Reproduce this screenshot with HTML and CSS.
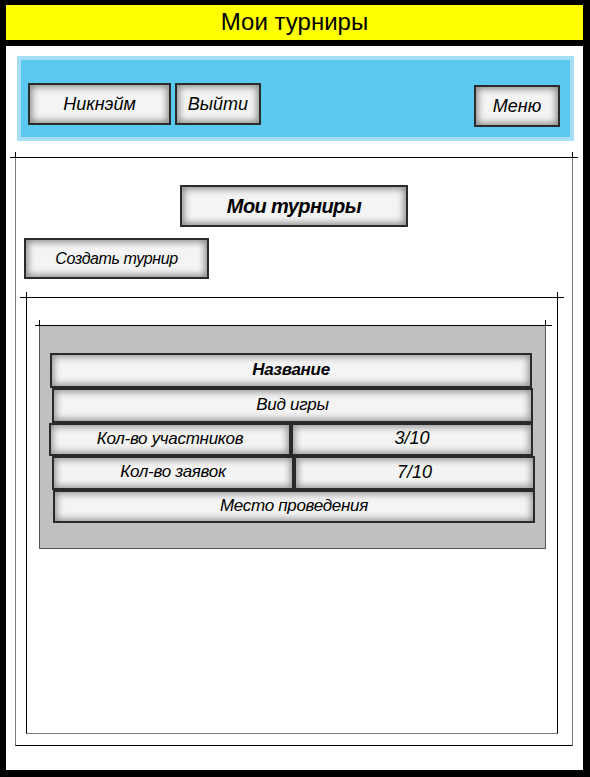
FILE: index.html
```html
<!DOCTYPE html>
<html lang="ru">
<head>
<meta charset="utf-8">
<title>Мои турниры</title>
<link rel="stylesheet" href="styles.css">
</head>
<body>
<div class="frame">
  <header class="topbar">Мои турниры</header>
  <nav class="toolbar">
    <div class="btn btn-nick">Никнэйм</div>
    <div class="btn btn-exit">Выйти</div>
    <div class="btn btn-menu">Меню</div>
  </nav>
  <section class="box outer">
    <div class="btn btn-title">Мои турниры</div>
    <div class="btn btn-create">Создать турнир</div>
    <div class="box inner">
      <div class="panel">
        <div class="row r1"><div class="cell bold">Название</div></div>
        <div class="row r2"><div class="cell">Вид игры</div></div>
        <div class="row r3"><div class="cell half">Кол-во участников</div><div class="cell num">3/10</div></div>
        <div class="row r4"><div class="cell half">Кол-во заявок</div><div class="cell num">7/10</div></div>
        <div class="row r5"><div class="cell">Место проведения</div></div>
      </div>
    </div>
  </section>
</div>
</body>
</html>
```

FILE: styles.css
```css
* { box-sizing: border-box; }
html, body { margin: 0; padding: 0; background: #fff; }
body { font-family: "Liberation Sans", Arial, sans-serif; color: #000; }

.frame {
  width: 590px;
  height: 777px;
  border-style: solid;
  border-color: #000;
  border-width: 5px 7px 7px 6px;
  background: #fff;
  display: flex;
  flex-direction: column;
  align-items: flex-start;
}

.topbar {
  width: 100%;
  height: 41px;
  background: #ffff00;
  border-bottom: 6px solid #000;
  display: flex;
  align-items: center;
  justify-content: center;
  font-size: 24px;
  padding-bottom: 2px;
}

.toolbar {
  margin: 10px 0 0 11px;
  width: 557px;
  height: 85px;
  border: 4px solid #a6def6;
  background: #5bc8f0;
  display: flex;
  align-items: flex-start;
  padding: 23px 10px 0 7px;
  gap: 4px;
}

.btn {
  display: flex;
  align-items: center;
  justify-content: center;
  border: 2px solid #2b2b2b;
  background: #f4f4f4;
  box-shadow: inset 0 0 7px 2px rgba(0, 0, 0, 0.45);
  font-style: italic;
  font-size: 18px;
  flex: none;
}

.btn-nick { width: 143px; height: 42px; }
.btn-exit { width: 86px; height: 42px; }
.btn-menu { width: 86px; height: 42px; margin-top: 2px; margin-left: auto; }

.box { position: relative; }
.box::before {
  content: "";
  position: absolute;
  top: -1px;
  left: -6px;
  right: -6px;
  height: 1px;
  background: #000;
}
.box::after {
  content: "";
  position: absolute;
  top: -6px;
  left: -1px;
  right: -1px;
  height: 6px;
  border-left: 1px solid #000;
  border-right: 1px solid #000;
}

.outer {
  margin: 16px 0 0 9px;
  width: 558px;
  height: 589px;
  border-top: 1px solid #000;
  border-left: 1px solid #7a7a7a;
  border-right: 1px solid #7a7a7a;
  border-bottom: 1px solid #000;
  display: flex;
  flex-direction: column;
  align-items: flex-start;
}

.btn-title {
  width: 228px;
  height: 42px;
  margin: 27px auto 0 auto;
  align-self: center;
  font-weight: bold;
  font-size: 20px;
  letter-spacing: -0.6px;
}

.btn-create {
  width: 185px;
  height: 41px;
  margin: 11px 0 0 8px;
  font-size: 16px;
  letter-spacing: -0.4px;
}

.inner {
  margin: 18px 0 0 10px;
  width: 532px;
  height: 437px;
  border-top: 1px solid #000;
  border-left: 1px solid #000;
  border-right: 1px solid #000;
  border-bottom: 1px solid #7a7a7a;
}
.inner::before { left: -7px; right: -7px; }

.panel {
  position: relative;
  margin: 27px 0 0 12px;
  width: 507px;
  height: 224px;
  background: #c0c0c0;
  border: 1px solid #555;
  border-top-color: #000;
  padding-top: 27px;
}
.panel::before {
  content: "";
  position: absolute;
  top: -1px;
  left: -5px;
  right: -7px;
  height: 1px;
  background: #000;
}
.panel::after {
  content: "";
  position: absolute;
  top: -6px;
  left: -1px;
  right: -1px;
  height: 6px;
  border-left: 1px solid #000;
  border-right: 1px solid #000;
}

.row { display: flex; }
.r1 { margin-left: 10px; width: 482px; height: 35px; }
.r2 { margin-left: 12px; width: 481px; height: 35px; }
.r3 { margin-left: 9px; width: 484px; height: 33px; }
.r4 { margin-left: 12px; width: 483px; height: 34px; }
.r5 { margin-left: 13px; width: 482px; height: 33px; }

.cell {
  flex: 1;
  display: flex;
  align-items: center;
  justify-content: center;
  border: 2px solid #2a2a2a;
  background: #f4f4f4;
  box-shadow: inset 0 0 7px 2px rgba(0, 0, 0, 0.4);
  font-style: italic;
  font-size: 17px;
  letter-spacing: -0.3px;
  padding-bottom: 2px;
}
.cell.half { flex: none; width: 242px; }
.cell.bold { font-weight: bold; }
.cell.num { font-size: 18px; letter-spacing: 0; }
```
